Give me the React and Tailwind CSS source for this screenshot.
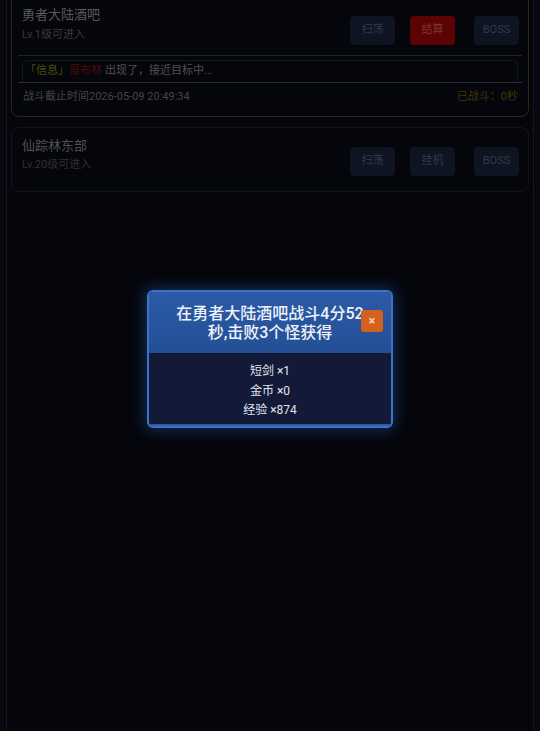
import React from "react";

const font = { fontFamily: 'Roboto, "Noto Sans CJK SC", "Noto Sans", sans-serif' };

function Btn({ children, red }) {
  return (
    <div
      className={
        "w-[45px] h-[29px] rounded-[4px] flex items-center justify-center text-[11px] " +
        (red ? "bg-[#5c0303] text-[#7a3535]" : "bg-[#0e1421] text-[#333a48]")
      }
    >
      {children}
    </div>
  );
}

function Buttons({ second, red }) {
  return (
    <div className="flex mt-[10px]">
      <Btn>扫荡</Btn>
      <div className="ml-[15px]">
        <Btn red={red}>{second}</Btn>
      </div>
      <div className="ml-[19px]">
        <Btn>BOSS</Btn>
      </div>
    </div>
  );
}

export default function App() {
  return (
    <div className="relative h-[731px] bg-[#07080d] overflow-hidden" style={font}>
      <div className="mx-[6px] h-full border-x border-[#14161e] bg-[#05060b] px-[4px] flex flex-col">
        {/* Card 1 */}
        <div className="-mt-[7px] rounded-[8px] border border-[#2e2710] pt-[12px] pb-[12px]">
          <div className="flex items-start pl-[10px] pr-[9px]">
            <div className="flex-1">
              <div className="text-[13px] leading-[18px] text-[#5a5a5a]">勇者大陆酒吧</div>
              <div className="mt-[4px] text-[11px] leading-[14px] text-[#3a3a3a]">Lv.1级可进入</div>
            </div>
            <Buttons second="结算" red />
          </div>
          <div className="mx-[6px] mt-[10px] border-t border-[#1f2129]" />
          <div className="mx-[10px] mt-[4px] h-[22px] rounded-t-[6px] border border-b-0 border-[#15171e] flex items-center px-[2px] text-[11px] text-[#505050]">
            <span className="text-[#4d4a10]">「信息」</span>
            <span className="text-[#4a0c0c]">哥布林</span>
            <span className="ml-[3px]">出现了，接近目标中...</span>
          </div>
          <div className="mx-[6px] border-t border-[#2a2c33]" />
          <div className="flex justify-between items-center pl-[11px] pr-[10px] mt-[7px] text-[11px] leading-[14px]">
            <span className="text-[#444444]">战斗截止时间2026-05-09 20:49:34</span>
            <span className="text-[#3f3608]">已战斗：0秒</span>
          </div>
        </div>

        {/* Card 2 */}
        <div className="mt-[10px] rounded-[8px] border border-[#12141c] pt-[9px] pb-[15px]">
          <div className="flex items-start pl-[10px] pr-[9px]">
            <div className="flex-1">
              <div className="text-[13px] leading-[18px] text-[#505050]">仙踪林东部</div>
              <div className="mt-[3px] text-[11px] leading-[14px] text-[#303030]">Lv.20级可进入</div>
            </div>
            <Buttons second="挂机" />
          </div>
        </div>
      </div>

      {/* Modal overlay */}
      <div className="absolute inset-0 flex justify-center pt-[290px]">
        <div className="w-[246px] h-[138px] rounded-[6px] border-2 border-[#3f72c4] bg-[#121a38] overflow-hidden shadow-[0_0_14px_3px_rgba(40,110,220,0.35)] flex flex-col">
          <div className="relative h-[61px] bg-gradient-to-b from-[#2c5aa6] to-[#244f96] flex items-center justify-center px-[24px]">
            <div className="text-center text-[16px] leading-[19px] font-medium text-[#eef2fa]">
              在勇者大陆酒吧战斗4分52秒,击败3个怪获得
            </div>
            <div className="absolute right-[8px] top-[18px] w-[22px] h-[22px] rounded-[3px] bg-[#d4621c] flex items-center justify-center text-[12px] font-bold text-[#f3d9c8]">
              ×
            </div>
          </div>
          <div className="flex-1 flex flex-col items-center pt-[9px] text-[12px] leading-[19.5px] text-[#e4e6ee]">
            <div>短剑 ×1</div>
            <div>金币 ×0</div>
            <div>经验 ×874</div>
          </div>
          <div className="h-[2px] bg-[#2f5ba6]" />
        </div>
      </div>
    </div>
  );
}
